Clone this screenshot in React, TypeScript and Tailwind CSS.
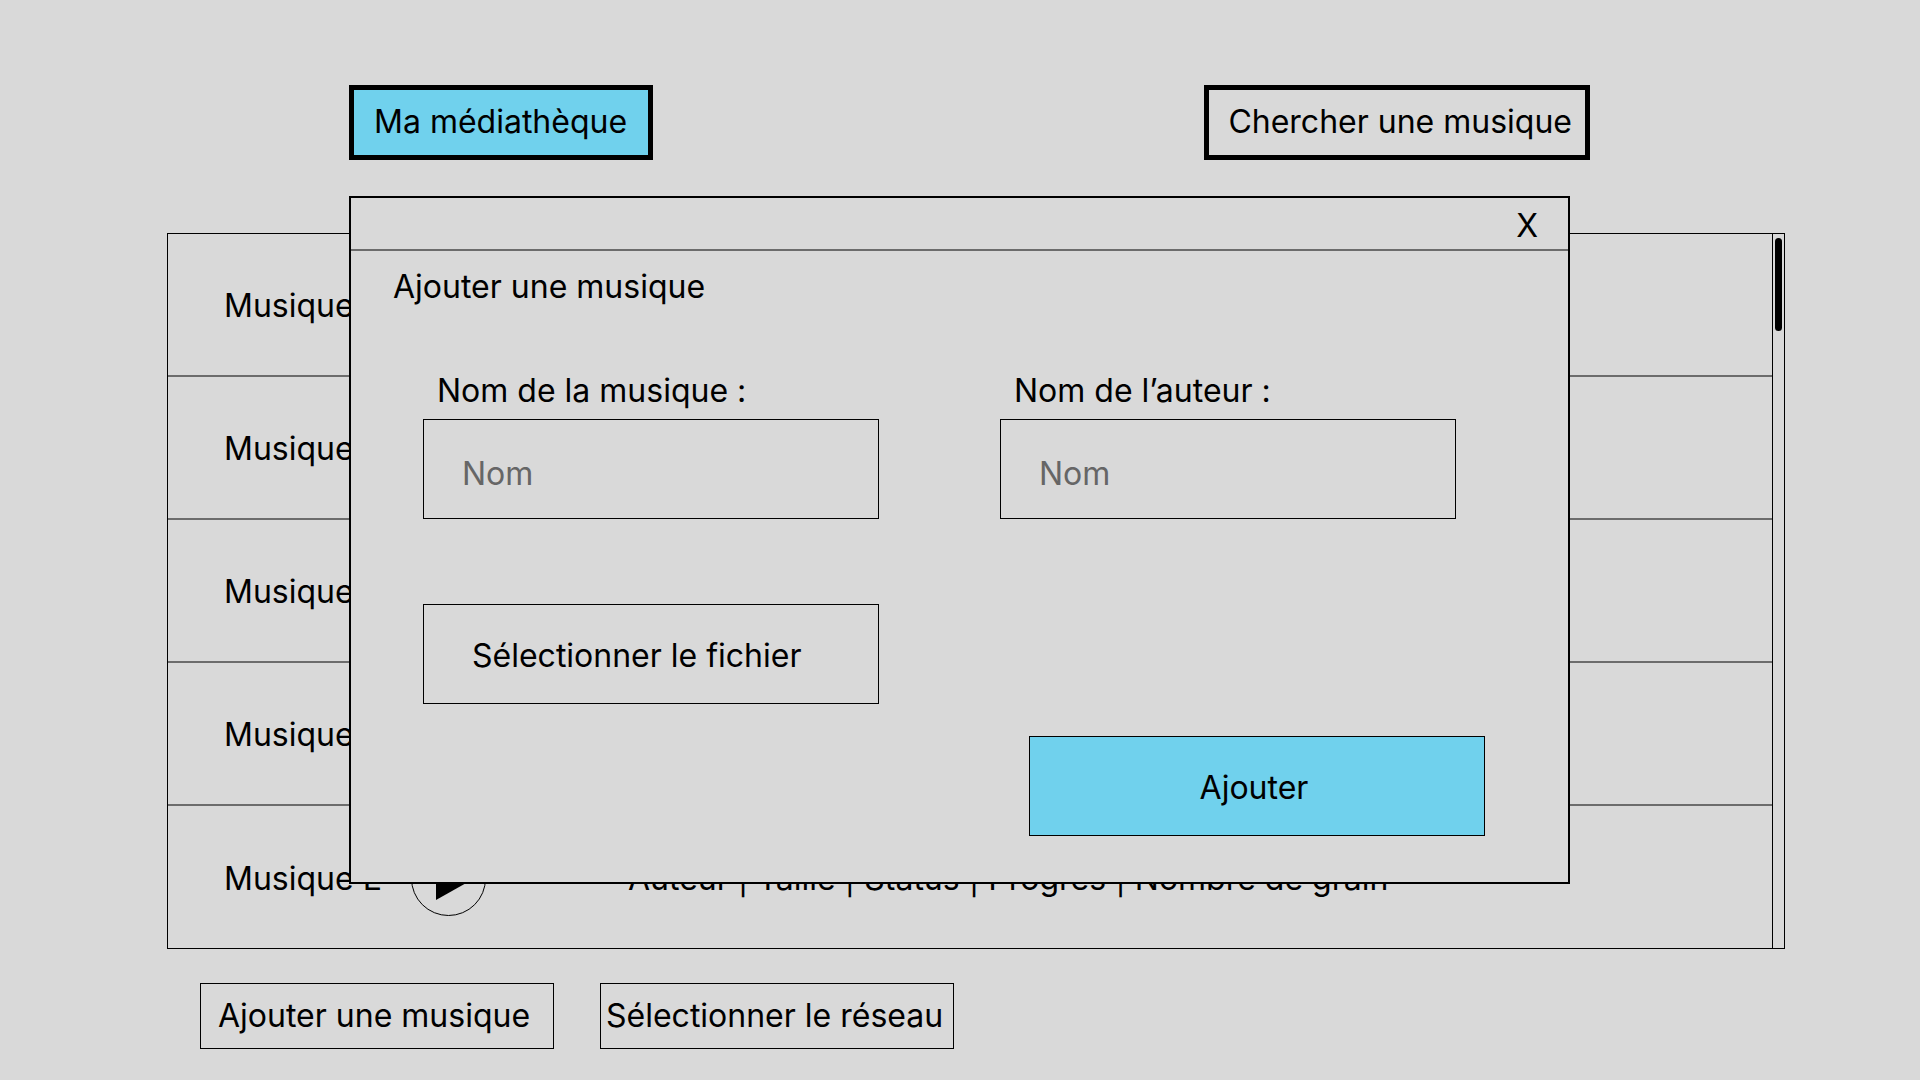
type Track = { name: string; details?: string };

const tracks: Track[] = [
  { name: 'Musique A' },
  { name: 'Musique B' },
  { name: 'Musique C' },
  { name: 'Musique D' },
  { name: 'Musique E', details: 'Auteur | Taille | Status | Progrès | Nombre de grain' },
];

function PlayIcon() {
  return (
    <svg viewBox="0 0 75 75" className="size-[75px]" aria-hidden="true">
      <circle cx="37.5" cy="37.5" r="37" fill="none" stroke="black" />
      <path d="M25 14 L65 36.5 L25 59 Z" fill="black" />
    </svg>
  );
}

function TrackRow({ name, details }: Track) {
  return (
    <li className="flex h-[143px] items-center border-b-2 border-[#6c6c6c] pt-[3px] pl-[56px] last:h-[142px] last:border-b-0">
      <span className="w-[187px] shrink-0">{name}</span>
      <button type="button" aria-label={`Lire ${name}`} className="shrink-0">
        <PlayIcon />
      </button>
      {details && <span className="truncate pl-[142px]">{details}</span>}
    </li>
  );
}

function Field({ id, label }: { id: string; label: string }) {
  return (
    <div className="flex flex-col gap-[8px]">
      <label htmlFor={id} className="pl-[14px]">
        {label}
      </label>
      <input
        id={id}
        type="text"
        placeholder="Nom"
        className="h-[100px] w-full border border-black bg-transparent pt-[8px] pl-[38px] placeholder:text-[#666666] placeholder:opacity-100"
      />
    </div>
  );
}

function AddTrackDialog() {
  return (
    <div className="absolute inset-x-0 top-[196px] pr-[350px] pl-[349px]">
      <section role="dialog" aria-labelledby="dialog-title" className="border-2 border-black bg-[#d9d9d9]">
        <div className="flex h-[53px] items-center justify-end border-b-2 border-[#6c6c6c] pr-[30px]">
          <button type="button" className="pt-[4px]">
            X
          </button>
        </div>
        <h2 id="dialog-title" className="pt-[16px] pl-[42px]">
          Ajouter une musique
        </h2>
        <form className="pt-[64px] pb-[46px]">
          <div className="grid grid-cols-2 gap-x-[121px] gap-y-[85px] pr-[112px] pl-[72px]">
            <Field id="track-name" label="Nom de la musique :" />
            <Field id="author-name" label="Nom de l’auteur :" />
            <button type="button" className="h-[100px] border border-black pt-[4px] pl-[48px] text-left">
              Sélectionner le fichier
            </button>
          </div>
          <div className="flex justify-end pt-[32px] pr-[83px]">
            <button type="button" className="h-[100px] w-[456px] border border-black bg-[#70d1ed] pt-[4px] pr-[6px]">
              Ajouter
            </button>
          </div>
        </form>
      </section>
    </div>
  );
}

export default function App() {
  return (
    <div className="relative min-h-screen bg-[#d9d9d9] pt-[85px] pb-[31px] font-['Inter',sans-serif] text-[32px] leading-[40px] text-black">
      <nav className="flex justify-between pr-[330px] pl-[349px]">
        <button type="button" className="h-[75px] border-5 border-black bg-[#70d1ed] pr-[21px] pb-[2px] pl-[20px]">
          Ma médiathèque
        </button>
        <button type="button" className="h-[75px] border-5 border-black pr-[13px] pb-[2px] pl-[19px]">
          Chercher une musique
        </button>
      </nav>

      <main className="pt-[73px] pr-[135px] pl-[167px]">
        <div className="flex border border-black">
          <ul className="min-w-0 flex-1">
            {tracks.map((track) => (
              <TrackRow key={track.name} name={track.name} details={track.details} />
            ))}
          </ul>
          <div className="flex w-[12px] justify-center border-l border-black pt-[4px]">
            <div className="h-[93px] w-[7px] rounded-full bg-black" />
          </div>
        </div>
        <div className="flex gap-[46px] pt-[34px] pl-[33px]">
          <button type="button" className="h-[66px] w-[354px] border border-black pl-[17px] text-left">
            Ajouter une musique
          </button>
          <button type="button" className="h-[66px] w-[354px] border border-black pl-[5px] text-left">
            Sélectionner le réseau
          </button>
        </div>
      </main>

      <AddTrackDialog />
    </div>
  );
}
